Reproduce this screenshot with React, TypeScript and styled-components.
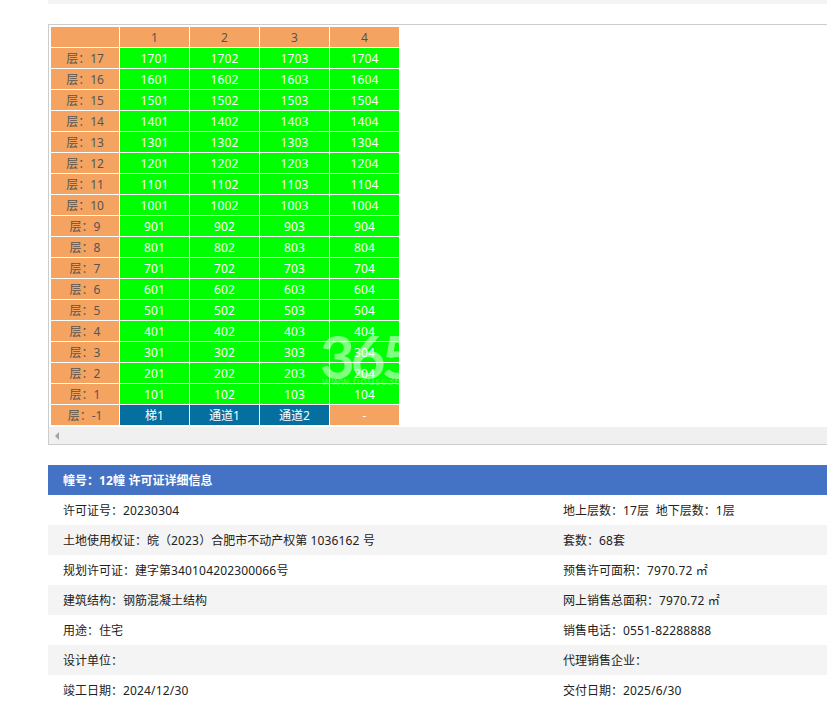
import React from "react";
import styled, { createGlobalStyle } from "styled-components";

const Global = createGlobalStyle`
  html, body { margin: 0; padding: 0; background: #fff; overflow: hidden; }
  body { font-family: "Noto Sans", "Noto Sans CJK SC", sans-serif; font-size: 12px; color: #222; }
`;
const Page = styled.div`
  width: 1000px;
  margin-left: 48px;
`;
const TopStrip = styled.div`
  height: 4px;
  background: #f4f4f4;
  margin-bottom: 20px;
`;
const ScrollBox = styled.div`
  position: relative;
  border: 1px solid #ccc;
  border-right: 0;
  overflow: hidden;
  margin-bottom: 20px;
`;
const Grid = styled.table`
  border-collapse: separate;
  border-spacing: 1px;
  table-layout: fixed;
  width: 350px;
  margin: 1px 0 1px 1px;
`;
const Cell = styled.td<{ $kind: string; $wide?: boolean }>`
  box-sizing: border-box;
  height: 20px;
  padding: 1px 0 0;
  text-align: center;
  line-height: 19px;
  font-size: 12px;
  width: ${(p) => (p.$wide ? "68px" : "69px")};
  color: ${(p) => (p.$kind === "head" ? "#555" : "#fff")};
  background: ${(p) =>
    p.$kind === "green" ? "#00ff00" : p.$kind === "blue" ? "#0570a0" : "#f4a460"};
`;
const Track = styled.div`
  height: 17px;
  background: #f0f0f0;
  display: flex;
  align-items: center;
  padding-left: 6px;
`;
const Arrow = styled.span`
  width: 0;
  height: 0;
  border-style: solid;
  border-width: 4px 4px 4px 0;
  border-color: transparent #a3a3a3 transparent transparent;
`;
const Watermark = styled.div`
  position: absolute;
  left: 271px;
  top: 301px;
  pointer-events: none;
  white-space: nowrap;
`;
const MarkNumber = styled.div`
  font-family: "Lato", sans-serif;
  font-weight: 700;
  font-size: 60px;
  line-height: 60px;
  letter-spacing: -4px;
  color: rgba(255, 255, 255, 0.5);
`;
const MarkUrl = styled.div`
  font-size: 11px;
  line-height: 10px;
  letter-spacing: 0.6px;
  margin: -10px 0 0 2px;
  color: rgba(255, 255, 255, 0.3);
`;
const InfoTitle = styled.div`
  height: 30px;
  line-height: 32px;
  background: #4472c4;
  color: #fff;
  font-weight: 700;
  padding-left: 15px;
`;
const InfoRow = styled.div<{ $alt: boolean }>`
  display: grid;
  grid-template-columns: 1fr 1fr;
  height: 30px;
  line-height: 32px;
  background: ${(p) => (p.$alt ? "#f4f4f4" : "#fff")};
`;
const InfoCell = styled.div`
  padding-left: 15px;
  white-space: pre;
`;
const Latin = styled.span`
  letter-spacing: 0.16px;
`;

const spaced = (text: string) =>
  text.split(/([0-9.\-/ ]+)/).map((part, i) =>
    i % 2 === 1 ? <Latin key={i}>{part}</Latin> : part
  );

const floors = [17, 16, 15, 14, 13, 12, 11, 10, 9, 8, 7, 6, 5, 4, 3, 2, 1];
const info = [
  ["许可证号：20230304", "地上层数：17层  地下层数：1层"],
  ["土地使用权证：皖（2023）合肥市不动产权第 1036162 号", "套数：68套"],
  ["规划许可证：建字第340104202300066号", "预售许可面积：7970.72 ㎡"],
  ["建筑结构：钢筋混凝土结构", "网上销售总面积：7970.72 ㎡"],
  ["用途：住宅", "销售电话：0551-82288888"],
  ["设计单位：", "代理销售企业："],
  ["竣工日期：2024/12/30", "交付日期：2025/6/30"],
];

export default function App() {
  return (
    <Page>
      <Global />
      <TopStrip />
      <ScrollBox>
        <Grid>
          <tbody>
            <tr>
              <Cell $kind="head" $wide />
              {[1, 2, 3, 4].map((n) => (
                <Cell key={n} $kind="head">{n}</Cell>
              ))}
            </tr>
            {floors.map((f) => (
              <tr key={f}>
                <Cell $kind="head" $wide>层：{f}</Cell>
                {[1, 2, 3, 4].map((n) => (
                  <Cell key={n} $kind="green">{spaced(String(f * 100 + n))}</Cell>
                ))}
              </tr>
            ))}
            <tr>
              <Cell $kind="head" $wide>层：-1</Cell>
              <Cell $kind="blue">梯1</Cell>
              <Cell $kind="blue">通道1</Cell>
              <Cell $kind="blue">通道2</Cell>
              <Cell $kind="orange">-</Cell>
            </tr>
          </tbody>
        </Grid>
        <Track><Arrow /></Track>
        <Watermark>
          <MarkNumber>365</MarkNumber>
          <MarkUrl>www.house365.com</MarkUrl>
        </Watermark>
      </ScrollBox>
      <InfoTitle>{spaced("幢号：12幢 许可证详细信息")}</InfoTitle>
      {info.map((r, i) => (
        <InfoRow key={i} $alt={i % 2 === 1}>
          <InfoCell>{spaced(r[0])}</InfoCell>
          <InfoCell>{spaced(r[1])}</InfoCell>
        </InfoRow>
      ))}
    </Page>
  );
}
